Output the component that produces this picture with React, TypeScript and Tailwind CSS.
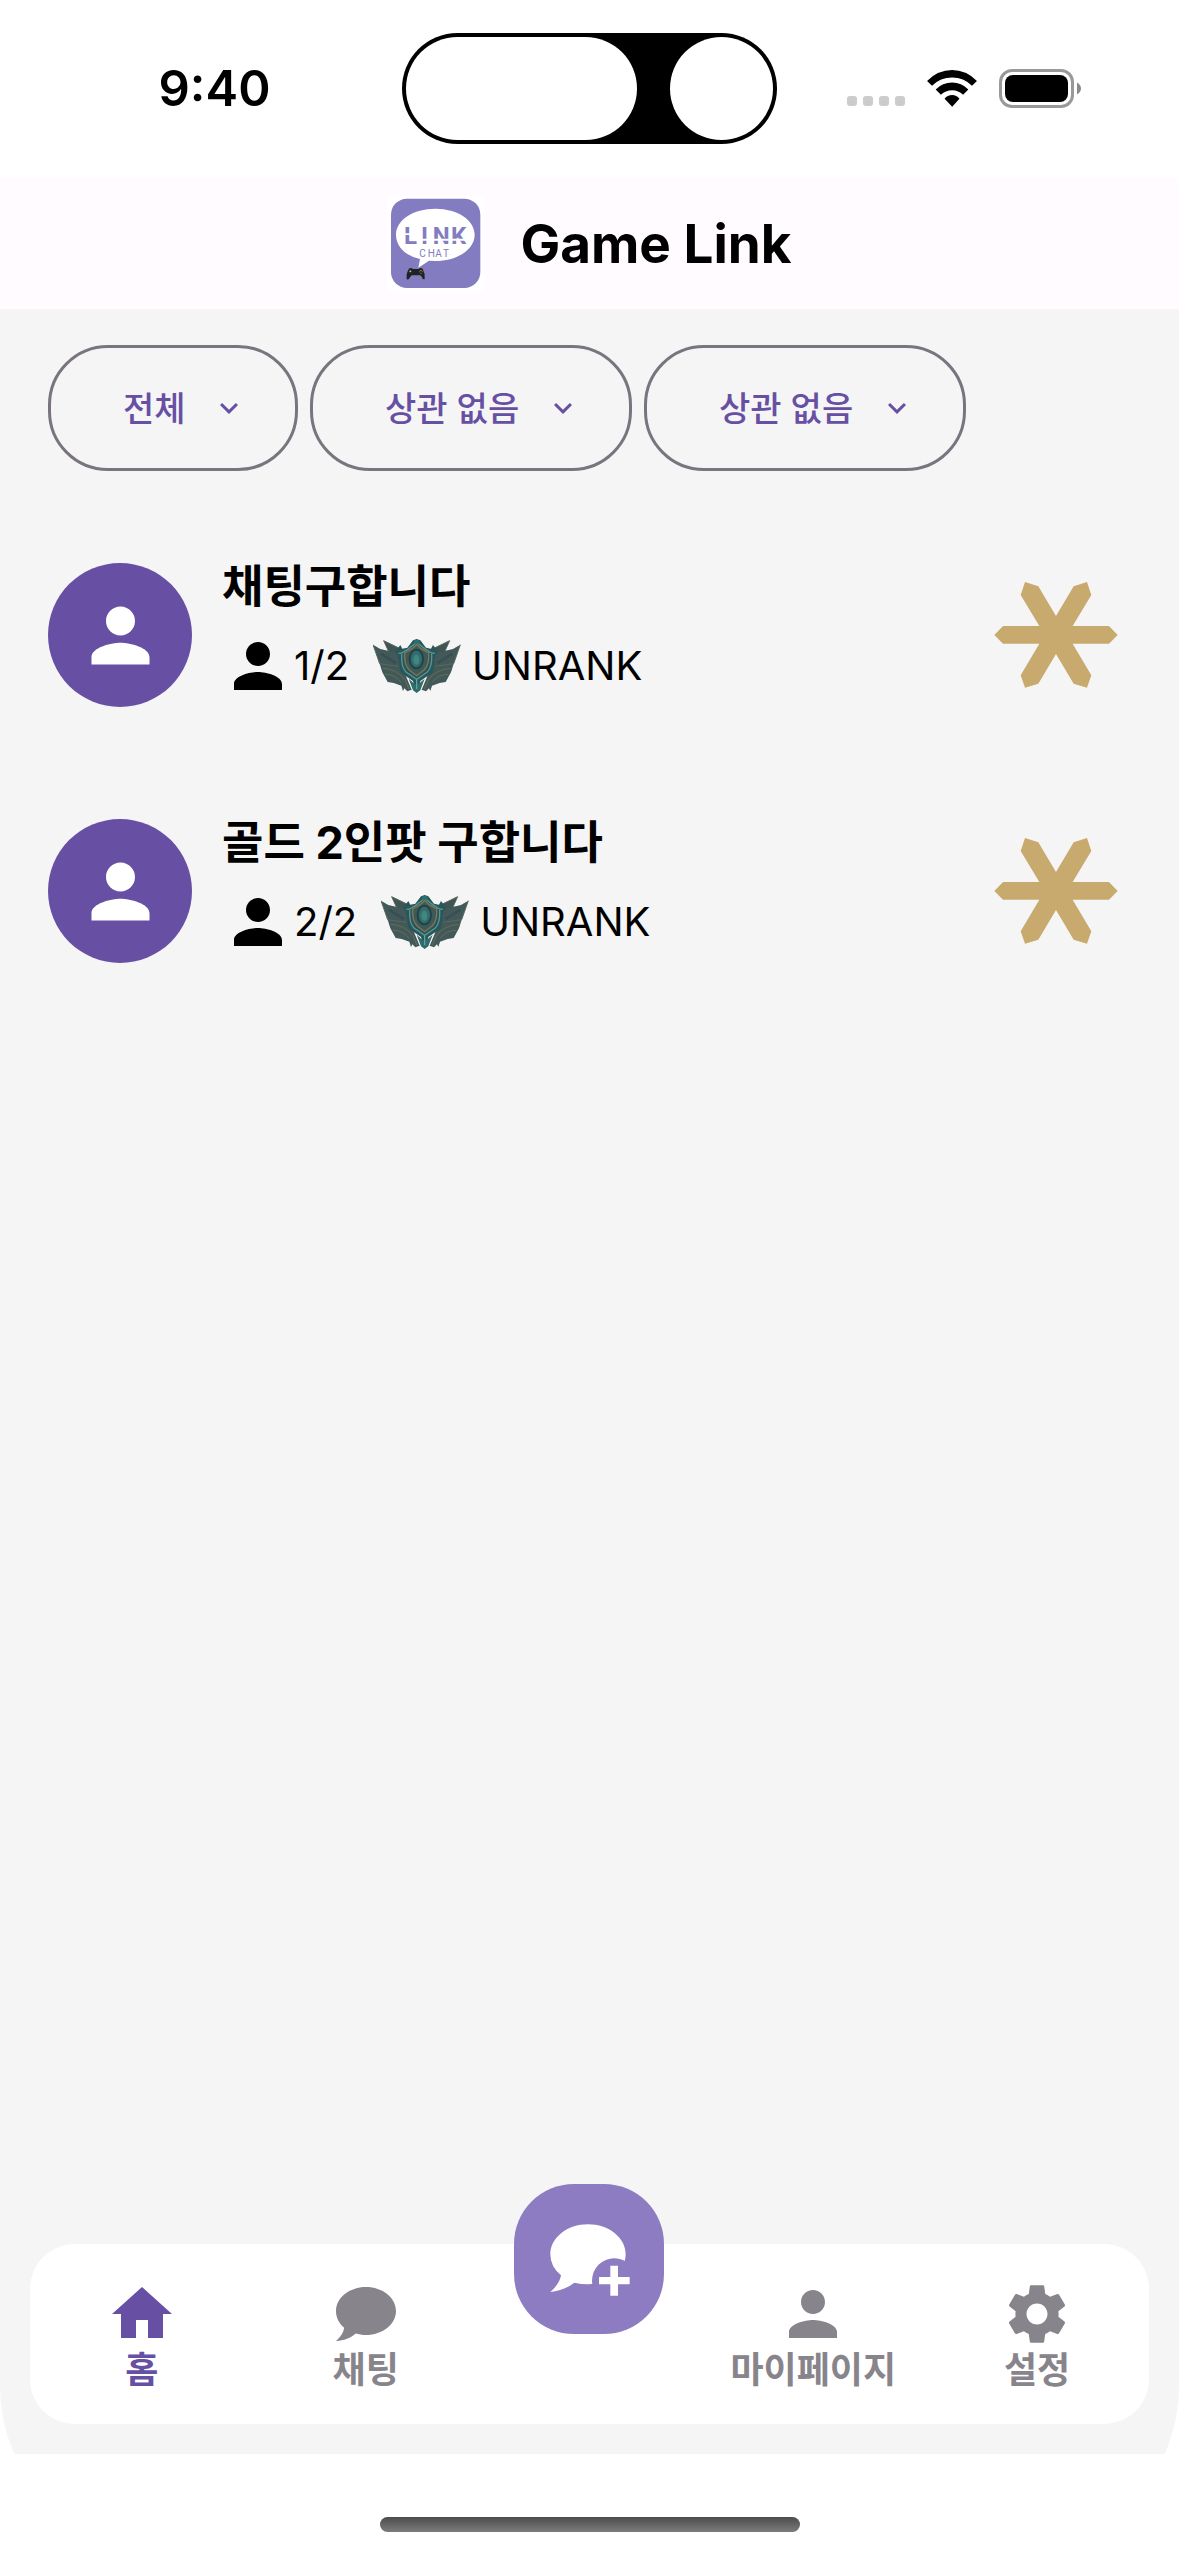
import React from "react";

const PERSON =
  "M12 12c2.21 0 4-1.79 4-4s-1.79-4-4-4-4 1.79-4 4 1.79 4 4 4zm0 2c-2.67 0-8 1.34-8 4v2h16v-2c0-2.66-5.33-4-8-4z";
const HOME = "M10 20v-6h4v6h5v-8h3L12 3 2 12h3v8z";
const GEAR =
  "M19.14 12.94c.04-.3.06-.61.06-.94 0-.32-.02-.64-.07-.94l2.03-1.58c.18-.14.23-.41.12-.61l-1.92-3.32c-.12-.22-.37-.29-.59-.22l-2.39.96c-.5-.38-1.03-.7-1.62-.94l-.36-2.54c-.04-.24-.24-.41-.48-.41h-3.84c-.24 0-.43.17-.47.41l-.36 2.54c-.59.24-1.13.57-1.62.94l-2.39-.96c-.22-.08-.47 0-.59.22L2.74 8.87c-.12.21-.08.47.12.61l2.03 1.58c-.05.3-.09.63-.09.94s.02.64.07.94l-2.03 1.58c-.18.14-.23.41-.12.61l1.92 3.32c.12.22.37.29.59.22l2.39-.96c.5.38 1.03.7 1.62.94l.36 2.54c.05.24.24.41.48.41h3.84c.24 0 .44-.17.47-.41l.36-2.54c.59-.24 1.13-.56 1.62-.94l2.39.96c.22.08.47 0 .59-.22l1.92-3.32c.12-.22.07-.47-.12-.61l-2.01-1.58zM12 15.5c-1.93 0-3.5-1.57-3.5-3.5s1.57-3.5 3.5-3.5 3.5 1.57 3.5 3.5-1.57 3.5-3.5 3.5z";
const CHAT =
  "M12 3C17.52 3 22 6.58 22 11S17.52 19 12 19C10.7 19 9.6 18.8 8.55 18.5 7 20 4.6 20.9 2 21 3.6 19.6 4.55 18.2 4.7 16.6 3 15.1 2 13.2 2 11 2 6.58 6.48 3 12 3z";

function Icon({ d, className }: { d: string; className: string }) {
  return (
    <svg viewBox="0 0 24 24" fill="currentColor" aria-hidden="true" className={className}>
      <path d={d} />
    </svg>
  );
}

function StatusBar() {
  return (
    <div className="grid h-[178px] grid-cols-3 bg-white pt-[33px]">
      <div className="flex h-[111px] items-center justify-center pl-9 text-[49px] font-semibold leading-none">
        9:40
      </div>
      <div className="flex h-[111px] w-[375px] justify-between justify-self-center rounded-full bg-black p-1">
        <div className="w-[231px] rounded-full bg-white" />
        <div className="w-[103px] rounded-full bg-white" />
      </div>
      <div className="flex h-[111px] items-center justify-end pr-[98px]">
        <div className="flex gap-[6px] self-end pb-[38px] pr-[22px]">
          <span className="size-[10px] rounded-[3px] bg-[#cccccc]" />
          <span className="size-[10px] rounded-[3px] bg-[#cccccc]" />
          <span className="size-[10px] rounded-[3px] bg-[#cccccc]" />
          <span className="size-[10px] rounded-[3px] bg-[#cccccc]" />
        </div>
        <svg viewBox="439 147 151 112" aria-hidden="true" className="h-[37px] w-[50px]">
          <path d="M439 180 Q472 147 515 147 Q557 147 590 180 L575 195 Q550 170 515 170 Q479 170 454 195Z" />
          <path d="M465 206 Q486 185 515 185 Q543 185 564 206 L548 222 Q534 208 515 208 Q495 208 481 222Z" />
          <path d="M492 234 Q501 223 515 223 Q528 223 537 234 L515 258Z" />
        </svg>
        <svg viewBox="0 0 82 39" aria-hidden="true" className="ml-[22px] h-[39px] w-[82px]">
          <rect x="1.5" y="1.5" width="72" height="36" rx="11.5" fill="none" stroke="#999" strokeWidth="3" />
          <rect x="6" y="6" width="63" height="27" rx="8" />
          <path d="M78 13.5 Q82 16 82 19.5 Q82 23 78 25.5Z" fill="#8a8a8a" />
        </svg>
      </div>
    </div>
  );
}

function Logo() {
  return (
    <svg viewBox="52 47 291 285" role="img" aria-label="Link Chat" className="h-[95px] w-[97px]">
      <rect x="52" y="47" width="291" height="285" fill="#ffffff" />
      <rect x="64" y="55" width="268" height="268" rx="48" fill="#847cc0" />
      <path
        d="M197 85C263 85 315 119 315 163S263 242 197 242L178 241 146 262 151 236C107 226 79 198 79 163 79 119 131 85 197 85Z"
        fill="#fff"
      />
      <g fill="#847cc0" fontFamily="'Liberation Sans Narrow', Roboto, sans-serif" fontWeight="700">
        <text x="103 154 189 244" y="191" fontSize="72">LINK</text>
        <text x="149 174 197 220" y="231" fontSize="30" fontWeight="400">CHAT</text>
      </g>
      <path d="M104 159h22v5h-22zM152 175h26v6h-26zM187 175h50v6h-50zM245 175h46v6h-46z" fill="#fff" />
      <path
        d="M118 265 Q124 261 130 266 H146 Q153 261 159 265 Q167 280 165 296 Q160 300 155 288 L151 285 H126 L121 291 Q116 301 111 296 Q109 278 118 265Z"
        fill="#222"
      />
      <path d="M119 273h6M122 270v6" stroke="#ddd" strokeWidth="2" />
      <circle cx="150" cy="274" r="2" fill="#3867d6" />
      <circle cx="158" cy="274" r="2" fill="#e0342c" />
      <circle cx="154" cy="270" r="2" fill="#e8c02c" />
      <circle cx="154" cy="279" r="2" fill="#35a845" />
    </svg>
  );
}

function Emblem() {
  return (
    <svg viewBox="12 36 264 162" aria-hidden="true" className="ml-6 mr-[11px] h-[54px] w-[88px]">
      <path d="M44 41 L98 67 90 100 58 72Z" fill="#3f5553" stroke="#5c685f" strokeWidth="3" />
      <path d="M242 41 L188 67 196 100 228 72Z" fill="#3f5553" stroke="#5c685f" strokeWidth="3" />
      <path
        d="M12 53 L34 66 86 78 112 150 128 188 115 193 106 184 102 192 97 176 74 168 56 165 40 136 32 110Z"
        fill="#42595a"
      />
      <path
        d="M274 53 L252 66 200 78 174 150 158 188 171 193 180 184 184 192 189 176 212 168 230 165 246 136 254 110Z"
        fill="#42595a"
      />
      <path d="M12 53 L32 110 88 118 M274 53 L254 110 198 118" fill="none" stroke="#5b675b" strokeWidth="3" />
      <path d="M36 80 L80 108 M250 80 L206 108" stroke="#394d52" strokeWidth="7" />
      <path
        d="M42 124 Q84 127 108 158 L120 186 M244 124 Q202 127 178 158 L166 186 M48 142 Q78 142 96 165 M238 142 Q208 142 190 165"
        fill="none"
        stroke="#6b6b52"
        strokeWidth="3"
      />
      <path
        d="M78 75 L94 54 100 65 115 62 132 40 143 36 154 40 171 62 186 65 192 54 208 75 199 84 192 136 154 162 143 198 132 162 94 136 87 84Z"
        fill="#2c5559"
      />
      <path d="M119 155 L141 174 143 194 145 174 167 155 154 190 143 198 132 190Z" fill="#2f6d6b" />
      <path
        d="M88 79 L98 78 116 67 134 53 143 46 152 53 170 67 188 78 198 79 M98 81 Q96 120 111 135 L143 157 175 135 Q190 120 188 81"
        fill="none"
        stroke="#4f9896"
        strokeWidth="4"
      />
      <path
        d="M107 78 L129 65 143 53 157 65 179 78 Q181 113 166 128 L143 146 120 128 Q105 113 107 78Z"
        fill="#3b5a58"
        stroke="#857551"
        strokeWidth="4"
      />
      <ellipse cx="142" cy="96" rx="20" ry="28" fill="#356c6c" stroke="#234249" strokeWidth="6" />
      <ellipse cx="142" cy="98" rx="9" ry="15" fill="#3e8880" />
      <ellipse cx="143" cy="44" rx="9" ry="6" fill="#28716f" />
      <path d="M143 158V187" stroke="#5aa5a1" strokeWidth="4" />
    </svg>
  );
}

function Star() {
  return (
    <svg viewBox="103 96 370 318" aria-hidden="true" className="h-[106px] w-[124px]">
      <path
        fill="#c8aa6e"
        d="M103 255L129 228H238L182 135 195 96 235 109 288 198 341 109 381 96 394 135 338 228H447L473 255 447 281H338L394 376 381 413 341 401 288 312 235 401 195 413 182 376 238 281H129Z"
      />
    </svg>
  );
}

function Filter({ label, value }: { label: string; value: string }) {
  return (
    <div className="relative">
      <select
        aria-label={label}
        className="h-[126px] appearance-none rounded-[60px] border-3 border-[#79747e] bg-transparent pl-[72px] pr-[109px] text-[34px] font-medium text-[#6750a4]"
      >
        <option>{value}</option>
      </select>
      <Icon
        d="M7.41 8.59 12 13.17l4.59-4.58L18 10l-6 6-6-6z"
        className="pointer-events-none absolute right-[51px] top-[45px] size-9 text-[#6750a4]"
      />
    </div>
  );
}

function Room({ title, count }: { title: string; count: string }) {
  return (
    <li>
      <a href="#room" className="flex items-center py-14 pl-12 pr-[61px]">
        <div className="flex size-36 items-center justify-center rounded-full bg-[#6750a4] text-white">
          <Icon d={PERSON} className="size-[87px]" />
        </div>
        <div className="ml-[30px] flex flex-1 flex-col gap-[19px] self-start">
          <h2 className="text-[45px] font-bold leading-[48px]">{title}</h2>
          <div className="flex items-center text-[40px] leading-[72px]">
            <Icon d={PERSON} className="size-18" />
            <span>{count}</span>
            <Emblem />
            <span>UNRANK</span>
          </div>
        </div>
        <Star />
      </a>
    </li>
  );
}

function Tab({ d, label, active = false }: { d: string; label: string; active?: boolean }) {
  return (
    <a
      href="#tab"
      aria-current={active ? "page" : undefined}
      className={
        "flex flex-col items-center py-[34px] text-[36px] font-bold leading-10 " +
        (active ? "text-[#6750a4]" : "text-[#88848b]")
      }
    >
      <Icon d={d} className="size-18" />
      <span className="whitespace-nowrap">{label}</span>
    </a>
  );
}

function NewChatButton() {
  return (
    <button
      type="button"
      aria-label="새 채팅"
      className="-mt-15 size-[150px] justify-self-center rounded-[60px] bg-[#8d7cc1]"
    >
      <svg viewBox="30 27 450 450" aria-hidden="true" className="size-full">
        <path
          fill="#fff"
          d="M252 148C314 148 365 188 365 238S314 328 252 328Q231 328 211 323 178 348 139 351 168 325 171 301 139 275 139 238C139 188 190 148 252 148Z"
        />
        <circle cx="331" cy="317" r="67" fill="#8d7cc1" />
        <path fill="#fff" d="M319 272h23v34h35v22h-35v34h-23v-34h-34v-22h34z" />
      </svg>
    </button>
  );
}

export default function App() {
  return (
    <div className="bg-white">
      <div className="flex min-h-screen flex-col overflow-hidden rounded-b-[170px] bg-[#f5f5f5] font-['Inter','Noto_Sans_CJK_KR',sans-serif] text-black">
        <StatusBar />
        <header className="flex h-[131px] items-center justify-center gap-9 bg-[#fffbff]">
          <Logo />
          <h1 className="text-[53px] font-bold leading-[48px]">Game Link</h1>
        </header>
        <main className="flex-1">
          <div className="flex gap-3 px-12 py-9">
            <Filter label="게임" value="전체" />
            <Filter label="포지션" value="상관 없음" />
            <Filter label="랭크" value="상관 없음" />
          </div>
          <ul>
            <Room title="채팅구합니다" count="1/2" />
            <Room title="골드 2인팟 구합니다" count="2/2" />
          </ul>
        </main>
        <nav className="mx-[30px] mb-[30px] grid h-[180px] grid-cols-5 rounded-[45px] bg-white">
          <Tab d={HOME} label="홈" active />
          <Tab d={CHAT} label="채팅" />
          <div className="grid content-start">
            <NewChatButton />
          </div>
          <Tab d={PERSON} label="마이페이지" />
          <Tab d={GEAR} label="설정" />
        </nav>
        <div className="flex h-[102px] items-end justify-center bg-white pb-6">
          <div className="h-[15px] w-[420px] rounded-full bg-linear-to-b from-[#4c4c4c] to-[#7c7c7c]" />
        </div>
      </div>
    </div>
  );
}
